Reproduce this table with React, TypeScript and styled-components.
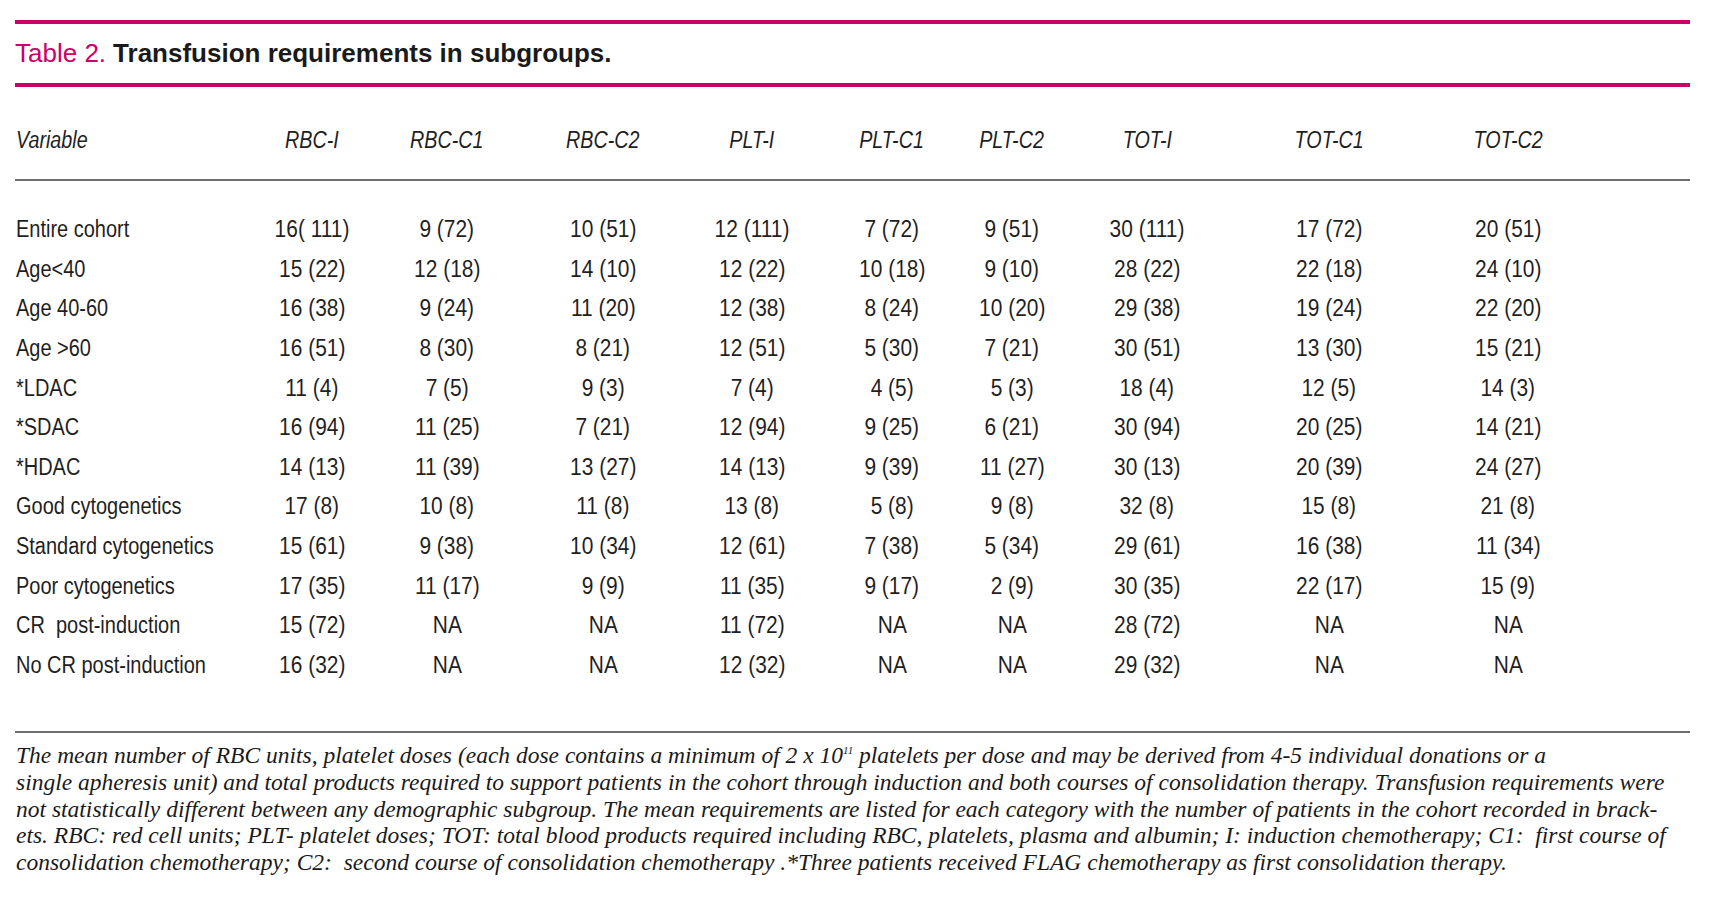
import styled, { createGlobalStyle } from "styled-components";

const GlobalStyle = createGlobalStyle`
  body {
    margin: 0;
    background: #ffffff;
    color: #1a1a1a;
  }
`;

const COLUMNS = ["RBC-I", "RBC-C1", "RBC-C2", "PLT-I", "PLT-C1", "PLT-C2", "TOT-I", "TOT-C1", "TOT-C2"];

const ROWS: [string, string[]][] = [
  ["Entire cohort", ["16( 111)", "9 (72)", "10 (51)", "12 (111)", "7 (72)", "9 (51)", "30 (111)", "17 (72)", "20 (51)"]],
  ["Age<40", ["15 (22)", "12 (18)", "14 (10)", "12 (22)", "10 (18)", "9 (10)", "28 (22)", "22 (18)", "24 (10)"]],
  ["Age 40-60", ["16 (38)", "9 (24)", "11 (20)", "12 (38)", "8 (24)", "10 (20)", "29 (38)", "19 (24)", "22 (20)"]],
  ["Age >60", ["16 (51)", "8 (30)", "8 (21)", "12 (51)", "5 (30)", "7 (21)", "30 (51)", "13 (30)", "15 (21)"]],
  ["*LDAC", ["11 (4)", "7 (5)", "9 (3)", "7 (4)", "4 (5)", "5 (3)", "18 (4)", "12 (5)", "14 (3)"]],
  ["*SDAC", ["16 (94)", "11 (25)", "7 (21)", "12 (94)", "9 (25)", "6 (21)", "30 (94)", "20 (25)", "14 (21)"]],
  ["*HDAC", ["14 (13)", "11 (39)", "13 (27)", "14 (13)", "9 (39)", "11 (27)", "30 (13)", "20 (39)", "24 (27)"]],
  ["Good cytogenetics", ["17 (8)", "10 (8)", "11 (8)", "13 (8)", "5 (8)", "9 (8)", "32 (8)", "15 (8)", "21 (8)"]],
  ["Standard cytogenetics", ["15 (61)", "9 (38)", "10 (34)", "12 (61)", "7 (38)", "5 (34)", "29 (61)", "16 (38)", "11 (34)"]],
  ["Poor cytogenetics", ["17 (35)", "11 (17)", "9 (9)", "11 (35)", "9 (17)", "2 (9)", "30 (35)", "22 (17)", "15 (9)"]],
  ["CR  post-induction", ["15 (72)", "NA", "NA", "11 (72)", "NA", "NA", "28 (72)", "NA", "NA"]],
  ["No CR post-induction", ["16 (32)", "NA", "NA", "12 (32)", "NA", "NA", "29 (32)", "NA", "NA"]],
];

const Page = styled.div`
  width: 1675px;
  padding: 20px 0 0 15px;
`;

const PinkRule = styled.div`
  height: 4px;
  background: #cc0066;
`;

const GrayRule = styled.div`
  height: 2px;
  background: #6e6e6e;
`;

const TitleBar = styled.div`
  height: 59px;
  display: flex;
  align-items: center;
  font-family: "Liberation Sans", Arial, sans-serif;
  font-size: 26px;
  font-weight: 700;
  color: #1a1a1a;
`;

const TitleLabel = styled.span`
  color: #cc0066;
  font-weight: 400;
  margin-right: 7px;
`;

const Row = styled.div<{ $head?: boolean }>`
  display: grid;
  grid-template-columns: 229px 136px 134px 178px 120px 160px 80px 190px 174px 184px;
  align-items: center;
  height: ${(p) => (p.$head ? "40px" : "39.6px")};
  font-family: "Liberation Sans", Arial, sans-serif;
  font-size: 23.5px;
  font-style: ${(p) => (p.$head ? "italic" : "normal")};
  color: #1f1f1f;
  white-space: pre;
`;

const HeadWrap = styled.div`
  padding: 33px 0 19px;
`;

const Body = styled.div`
  padding: 29px 0 46px;
`;

const Label = styled.div`
  padding-left: 1px;
`;

const Cell = styled.div`
  text-align: center;
`;

// the source face is a condensed grotesque; squeeze the Arial-metric face to match
const Narrow = styled.span<{ $origin?: string; $x?: number }>`
  display: inline-block;
  transform: scaleX(${(p) => p.$x ?? 0.86});
  transform-origin: ${(p) => p.$origin ?? "center"};
`;

const Notes = styled.div`
  padding-top: 9px;
  font-family: "Liberation Serif", "Times New Roman", serif;
  font-style: italic;
  font-size: 23.5px;
  line-height: 26.7px;
  color: #1a1a1a;
  white-space: pre;
  padding-left: 1px;
`;

const Sup = styled.sup`
  font-size: 11px;
  line-height: 0;
  vertical-align: 9px;
`;

export default function App() {
  return (
    <>
      <GlobalStyle />
      <Page>
        <PinkRule />
        <TitleBar>
          <TitleLabel>Table 2.</TitleLabel>
          Transfusion requirements in subgroups.
        </TitleBar>
        <PinkRule />
        <HeadWrap>
          <Row $head>
            <Label>
              <Narrow $origin="left" $x={0.84}>Variable</Narrow>
            </Label>
            {COLUMNS.map((c) => (
              <Cell key={c}>
                <Narrow $x={0.84}>{c}</Narrow>
              </Cell>
            ))}
          </Row>
        </HeadWrap>
        <GrayRule />
        <Body>
          {ROWS.map(([label, values]) => (
            <Row key={label}>
              <Label>
                <Narrow $origin="left" $x={0.85}>{label}</Narrow>
              </Label>
              {values.map((v, i) => (
                <Cell key={i}>
                  <Narrow $x={0.89}>{v}</Narrow>
                </Cell>
              ))}
            </Row>
          ))}
        </Body>
        <GrayRule />
        <Notes>
          The mean number of RBC units, platelet doses (each dose contains a minimum of 2 x 10<Sup>11</Sup> platelets per dose and may be derived from 4-5 individual donations or a
          <br />
          single apheresis unit) and total products required to support patients in the cohort through induction and both courses of consolidation therapy. Transfusion requirements were
          <br />
          not statistically different between any demographic subgroup. The mean requirements are listed for each category with the number of patients in the cohort recorded in brack-
          <br />
          ets. RBC: red cell units; PLT- platelet doses; TOT: total blood products required including RBC, platelets, plasma and albumin; I: induction chemotherapy; C1:  first course of
          <br />
          consolidation chemotherapy; C2:  second course of consolidation chemotherapy .*Three patients received FLAG chemotherapy as first consolidation therapy.
        </Notes>
      </Page>
    </>
  );
}
